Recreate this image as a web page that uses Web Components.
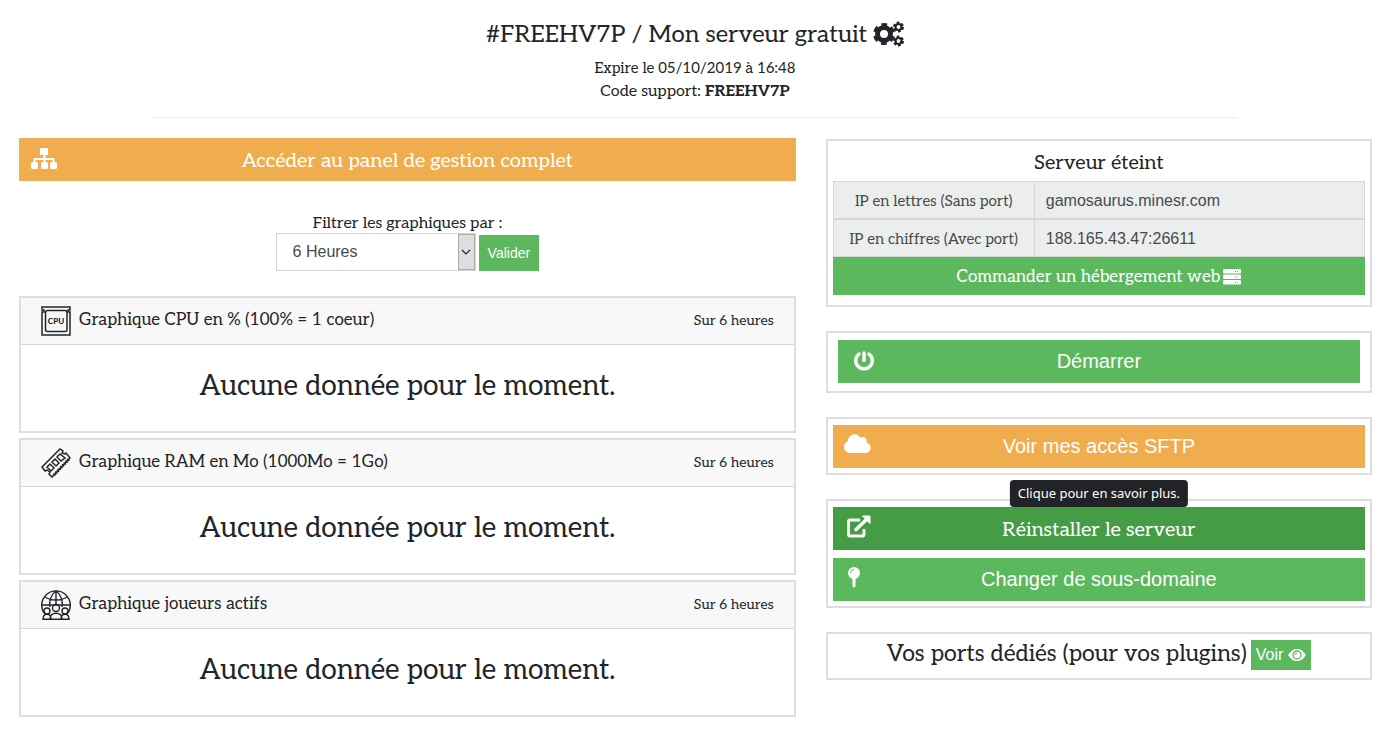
<!DOCTYPE html>
<html lang="fr">
<head>
<meta charset="utf-8">
<meta name="viewport" content="width=device-width, initial-scale=1">
<title>Mon serveur gratuit</title>
<style>
  body {
    --green: #5cb85c;
    --green-dark: #449d44;
    --orange: #f0ad4e;
    --line: #dedede;
    --slab: Aleo, "DejaVu Serif Condensed", "DejaVu Serif", serif;
    --sans: "Liberation Sans", Arial, sans-serif;
    margin: 0;
    background: #fff;
    color: #212529;
    font: 16px/24px var(--slab);
  }
</style>
</head>
<body>
<server-page>
  <server-header slot="header" code="FREEHV7P" expires="05/10/2019 à 16:48">Mon serveur gratuit</server-header>

  <action-button slot="graphs" icon="sitemap" color="orange">Accéder au panel de gestion complet</action-button>
  <graph-filter slot="graphs"></graph-filter>
  <graph-card slot="graphs" icon="cpu" period="Sur 6 heures">Graphique CPU en % (100% = 1 coeur)</graph-card>
  <graph-card slot="graphs" icon="ram" period="Sur 6 heures">Graphique RAM en Mo (1000Mo = 1Go)</graph-card>
  <graph-card slot="graphs" icon="players" period="Sur 6 heures">Graphique joueurs actifs</graph-card>

  <server-box slot="actions">
    <server-status letters="gamosaurus.minesr.com" numbers="188.165.43.47:26611">Serveur éteint</server-status>
  </server-box>
  <server-box slot="actions" inset>
    <action-button icon="power" font="sans">Démarrer</action-button>
  </server-box>
  <server-box slot="actions">
    <action-button icon="cloud" color="orange" font="sans">Voir mes accès SFTP</action-button>
  </server-box>
  <server-box slot="actions">
    <action-button icon="external" color="dark" tooltip="Clique pour en savoir plus.">Réinstaller le serveur</action-button>
    <action-button icon="pin" font="sans">Changer de sous-domaine</action-button>
  </server-box>
  <server-box slot="actions">
    <server-ports>Vos ports dédiés (pour vos plugins)</server-ports>
  </server-box>
</server-page>

<script>
const ICONS = {
  cogs: {
    box: "0 0 31 26",
    body: `
    <g fill="none" stroke="currentColor">
      <circle cx="11" cy="13" r="6.500" stroke-width="5"/>
      <circle cx="11" cy="13" r="9" stroke-width="4" stroke-dasharray="5.400 4.025" stroke-dashoffset="-2"/>
      <circle cx="25.500" cy="6" r="3" stroke-width="2.200"/>
      <circle cx="25.500" cy="6" r="4.500" stroke-width="2" stroke-dasharray="2.700 2.012"/>
      <circle cx="25.500" cy="20" r="3" stroke-width="2.200"/>
      <circle cx="25.500" cy="20" r="4.500" stroke-width="2" stroke-dasharray="2.700 2.012"/>
    </g>`,
  },
  sitemap: {
    box: "0 0 28 28",
    body: `
    <g fill="currentColor">
      <rect x="10" y="2" width="8" height="7" rx="1"/>
      <rect x="1" y="16" width="7" height="7" rx="1.500"/>
      <rect x="11" y="16" width="7" height="7" rx="1.500"/>
      <rect x="20" y="16" width="7" height="7" rx="1.500"/>
    </g>
    <path d="M14.500 8v9M4.500 17v-4h19v4" fill="none" stroke="currentColor" stroke-width="2" stroke-linejoin="round"/>`,
  },
  power: {
    box: "0 0 28 28",
    body: `
    <path d="M10 8a8.300 8.300 0 1 0 10 0" fill="none" stroke="currentColor" stroke-width="3.400" stroke-linecap="round"/>
    <path d="M15 7v7.500" stroke="currentColor" stroke-width="3.500" stroke-linecap="round"/>`,
  },
  cloud: {
    box: "0 -48 672 672",
    body: `<path fill="currentColor" d="M537.600 226.600c4.100-10.700 6.400-22.400 6.400-34.600 0-53-43-96-96-96-19.700 0-38.100 6-53.300 16.200C367 64.200 315.300 32 256 32c-88.400 0-160 71.600-160 160 0 2.700.1 5.400.2 8.100C40.200 219.800 0 273.200 0 336c0 79.500 64.500 144 144 144h368c70.700 0 128-57.300 128-128 0-61.900-44-113.600-102.400-125.400z"/>`,
  },
  external: {
    box: "0 0 28 28",
    body: `
    <path d="M16 5H6a1.500 1.500 0 0 0-1.500 1.500v13A1.500 1.500 0 0 0 6 21h12.500a1.500 1.500 0 0 0 1.500-1.500V14" fill="none" stroke="currentColor" stroke-width="2.800"/>
    <path d="M12 14.500L23 4" stroke="currentColor" stroke-width="3.600" stroke-linecap="round"/>
    <path d="M18.500 1H26v7.500z" fill="currentColor" stroke="currentColor" stroke-linejoin="round"/>`,
  },
  pin: {
    box: "0 0 28 28",
    body: `
    <circle cx="10" cy="9" r="6" fill="currentColor"/>
    <path d="M8.500 14h3v8L10 24l-1.500-2z" fill="currentColor"/>
    <path d="M6.500 9A3.500 3.500 0 0 1 10 5.500" fill="none" stroke="#5cb85c"/>`,
  },
  server: {
    box: "0 0 18 16",
    body: `
    <g fill="currentColor">
      <rect y="0" width="18" height="4.500" rx="1"/>
      <rect y="5.500" width="18" height="4.500" rx="1"/>
      <rect y="11" width="18" height="4.500" rx="1"/>
    </g>
    <path d="M12 2.500h1m1 0h1M12 8h1m1 0h1M12 13.500h1m1 0h1" stroke="#5cb85c"/>`,
  },
  eye: {
    box: "0 0 18 14",
    body: `
    <path d="M0 7C3 2.500 6 1 9 1s6 1.500 9 6c-3 4.500-6 6-9 6S3 11.500 0 7z" fill="currentColor"/>
    <circle cx="9" cy="7" r="4" fill="none" stroke="#5cb85c" stroke-width="1.300"/>
    <path d="M7 7a2 2 0 0 1 2-2" fill="none" stroke="#5cb85c"/>`,
  },
  cpu: {
    box: "0 0 30 30",
    body: `
    <path d="M1 6V29H29V6H27V4h2V1H1v3h2v2z" fill="none" stroke="currentColor" stroke-width="1.500"/>
    <rect x="4.500" y="4.500" width="21.500" height="21" rx="2" fill="none" stroke="currentColor" stroke-width="1.500"/>
    <text x="15" y="18" text-anchor="middle" font-family="Lato, sans-serif" font-weight="900" font-size="8" fill="currentColor">CPU</text>`,
  },
  ram: {
    box: "0 0 30 30",
    body: `
    <g fill="none" stroke="currentColor" stroke-width="1.500">
      <path d="M1 19L19 1l3 2-1 2 3 1 1-1 4 5-18 19-3-3 1-2-3-2-2 1z"/>
      <path d="M6 19l3-3 4 4-3 3zM11 14l3-3 4 4-3 3zM16 9l3-3 5 4-4 3z"/>
      <path d="M13 27L28 11" stroke-width="3" stroke-dasharray="1.500 1"/>
    </g>`,
  },
  players: {
    box: "0 0 30 30",
    body: `
    <g fill="none" stroke="currentColor" stroke-width="1.400">
      <path d="M3 23a14.300 14.300 0 1 1 24 0M15 1v14M9 17C8 11 10 4 15 1c5 3 7 10 6 16M4 7c6 4 16 4 22 0M1 15h28"/>
      <circle cx="15" cy="18" r="3.500"/>
      <circle cx="6" cy="21" r="3"/>
      <circle cx="24" cy="21" r="3"/>
      <path d="M9 29.300c0-4 2-6 6-6s6 2 6 6zM2 29.300c0-3 1-5 4-5s4 2 4 5zM20 29.300c0-3 1-5 4-5s4 2 4 5z"/>
    </g>`,
  },
  chevron: {
    box: "0 0 10 10",
    body: `<path d="M1 3l4 4 4-4" fill="none" stroke="currentColor" stroke-width="1.200"/>`,
  },
};

function icon(name) {
  const { box, body } = ICONS[name];
  return `<svg class="icon" viewBox="${box}" aria-hidden="true">${body}</svg>`;
}

class BaseElement extends HTMLElement {
  constructor() {
    super();
    this.attachShadow({ mode: "open" });
  }
  connectedCallback() {
    const template = document.createElement("template");
    template.innerHTML = this.render();
    this.shadowRoot.replaceChildren(template.content.cloneNode(true));
  }
}

class ServerPage extends BaseElement {
  render() {
    return `
    <style>
    :host{
        display:block;
    }
    main{
        display:grid;
        grid-template-columns:7fr 5fr;
        align-items:start;
        padding:0 3px 24px 4px;
    }
    section{
        display:flex;
        flex-direction:column;
        padding:0 15px;
    }
    #graphs{
        gap:5px;
    }
    #actions{
        gap:24px;
        padding-top:1px;
    }
    @media (max-width:900px){
        main{
            grid-template-columns:1fr;
            gap:24px;
        }
    }
    </style>
    <slot name="header"></slot>
    <main>
        <section id="graphs"><slot name="graphs"></slot></section>
        <section id="actions"><slot name="actions"></slot></section>
    </main>
    `;
  }
}

class ServerHeader extends BaseElement {
  render() {
    const code = this.getAttribute("code");
    return `
    <style>
    :host{
        display:block;
        padding-top:17px;
        text-align:center;
    }
    h1{
        display:flex;
        justify-content:center;
        align-items:center;
        gap:6px;
        margin:0;
        font-size:24px;
        font-weight:400;
        line-height:36px;
    }
    .icon{
        width:31px;
        height:26px;
        margin-bottom:2px;
    }
    p{
        margin:0;
    }
    .expires{
        margin-top:3px;
        font-size:15px;
    }
    hr{
        width:78%;
        margin:13px auto 20px;
        border:0;
        border-top:1px solid #ececec;
    }
    </style>
    <h1><span>#${code} / <slot></slot></span>${icon("cogs")}</h1>
    <p class="expires">Expire le ${this.getAttribute("expires")}</p>
    <p>Code support: <b>${code}</b></p>
    <hr>
    `;
  }
}

class ActionButton extends BaseElement {
  render() {
    const tooltip = this.getAttribute("tooltip");
    return `
    <style>
    :host{
        display:block;
        position:relative;
        --fill:var(--green);
    }
    :host([color="orange"]){
        --fill:var(--orange);
    }
    :host([color="dark"]){
        --fill:var(--green-dark);
    }
    button{
        display:grid;
        grid-template-columns:28px 1fr 28px;
        align-items:center;
        width:100%;
        height:43px;
        padding:3px 11px 0;
        border:0;
        background:var(--fill);
        color:#fff;
        font:20px/28px var(--slab);
        cursor:pointer;
    }
    :host([font="sans"]) button{
        padding:0 11px 1px;
        font:20px/28px var(--sans);
    }
    .icon{
        width:28px;
        height:28px;
        margin-bottom:3px;
    }
    .tooltip{
        position:absolute;
        left:50%;
        bottom:100%;
        transform:translateX(-50%);
        padding:4px 8px;
        border-radius:4px;
        background:#222326;
        color:#fff;
        font:13px/19px "Noto Sans", sans-serif;
        white-space:nowrap;
    }
    </style>
    <button type="button">${icon(this.getAttribute("icon"))}<span><slot></slot></span></button>
    ${tooltip ? `<div class="tooltip" role="tooltip">${tooltip}</div>` : ""}
    `;
  }
}

class GraphFilter extends BaseElement {
  render() {
    return `
    <style>
    :host{
        display:block;
        padding:28px 0 20px;
    }
    form{
        display:flex;
        flex-direction:column;
        align-items:center;
        margin:0;
    }
    label{
        line-height:19px;
    }
    .row{
        display:flex;
        align-items:end;
        gap:3px;
    }
    .select{
        position:relative;
    }
    select{
        appearance:none;
        display:block;
        width:200px;
        height:38px;
        padding:0 32px 0 16px;
        border:1px solid #d4d4d4;
        border-radius:0;
        background:#fff;
        color:#464a4c;
        font:16px/24px var(--sans);
    }
    .arrow{
        position:absolute;
        top:1px;
        right:1px;
        bottom:1px;
        display:grid;
        place-items:center;
        width:17px;
        box-sizing:border-box;
        border:1px solid #a9b09c;
        background:#dedede;
        pointer-events:none;
    }
    .icon{
        width:10px;
        height:10px;
    }
    button{
        height:36px;
        padding:0 9px;
        border:0;
        background:var(--green);
        color:#fff;
        font:14px/20px var(--sans);
    }
    </style>
    <form>
        <label for="period">Filtrer les graphiques par :</label>
        <div class="row">
            <div class="select">
                <select id="period" name="period">
                    <option>6 Heures</option>
                </select>
                <span class="arrow">${icon("chevron")}</span>
            </div>
            <button type="button">Valider</button>
        </div>
    </form>
    `;
  }
}

class GraphCard extends BaseElement {
  render() {
    return `
    <style>
    :host{
        display:block;
        border:2px solid var(--line);
    }
    header{
        display:flex;
        align-items:center;
        gap:8px;
        padding:8px 20px;
        border-bottom:1px solid #d6d6d6;
        background:#f8f8f8;
    }
    .icon{
        width:30px;
        height:30px;
    }
    h2{
        flex:1;
        margin:0;
        padding-bottom:2px;
        font-size:17px;
        font-weight:400;
        line-height:28px;
    }
    small{
        font-size:14px;
    }
    p{
        margin:0;
        padding:25px 0 27px;
        font-size:28px;
        line-height:34px;
        text-align:center;
    }
    </style>
    <header>
        ${icon(this.getAttribute("icon"))}
        <h2><slot></slot></h2>
        <small>${this.getAttribute("period")}</small>
    </header>
    <p>Aucune donnée pour le moment.</p>
    `;
  }
}

class ServerBox extends BaseElement {
  render() {
    return `
    <style>
    :host{
        display:flex;
        flex-direction:column;
        gap:8px;
        padding:6px 5px 5px;
        border:2px solid var(--line);
    }
    :host([inset]){
        padding:7px 10px 8px;
    }
    </style>
    <slot></slot>
    `;
  }
}

class ServerStatus extends BaseElement {
  render() {
    return `
    <style>
    :host{
        display:block;
        padding-bottom:5px;
    }
    h2{
        margin:0;
        padding-bottom:2px;
        font-size:20px;
        font-weight:400;
        line-height:32px;
        text-align:center;
    }
    table{
        width:100%;
        border-collapse:collapse;
        table-layout:fixed;
        background:#eceeed;
        color:#464a4c;
    }
    th, td{
        height:34px;
        padding:2px 0 0;
        border:1px solid #d6d6d6;
    }
    tr + tr th, tr + tr td{
        border-top-width:2px;
    }
    th{
        width:200px;
        font-size:15px;
        font-weight:400;
        white-space:nowrap;
    }
    td{
        padding-left:11px;
        font:16px/24px var(--sans);
    }
    a{
        display:flex;
        justify-content:center;
        align-items:center;
        gap:3px;
        box-sizing:border-box;
        height:38px;
        padding-top:2px;
        background:var(--green);
        color:#fff;
        font-size:17px;
        text-decoration:none;
    }
    .icon{
        width:18px;
        height:16px;
    }
    </style>
    <h2><slot></slot></h2>
    <table>
        <tr><th scope="row">IP en lettres (Sans port)</th><td>${this.getAttribute("letters")}</td></tr>
        <tr><th scope="row">IP en chiffres (Avec port)</th><td>${this.getAttribute("numbers")}</td></tr>
    </table>
    <a href="#hebergement"><span>Commander un hébergement web</span>${icon("server")}</a>
    `;
  }
}

class ServerPorts extends BaseElement {
  render() {
    return `
    <style>
    :host{
        display:flex;
        justify-content:center;
        align-items:start;
        gap:4px;
        padding-bottom:3px;
    }
    h2{
        margin:0;
        font-size:23px;
        font-weight:400;
        line-height:28px;
    }
    button{
        display:flex;
        align-items:center;
        gap:5px;
        height:30px;
        padding:0 5px;
        border:0;
        background:var(--green);
        color:#fff;
        font:16px/24px var(--sans);
    }
    .icon{
        width:18px;
        height:14px;
    }
    </style>
    <h2><slot></slot></h2>
    <button type="button"><span>Voir</span>${icon("eye")}</button>
    `;
  }
}

window.customElements.define("server-page", ServerPage);
window.customElements.define("server-header", ServerHeader);
window.customElements.define("action-button", ActionButton);
window.customElements.define("graph-filter", GraphFilter);
window.customElements.define("graph-card", GraphCard);
window.customElements.define("server-box", ServerBox);
window.customElements.define("server-status", ServerStatus);
window.customElements.define("server-ports", ServerPorts);
</script>
</body>
</html>
